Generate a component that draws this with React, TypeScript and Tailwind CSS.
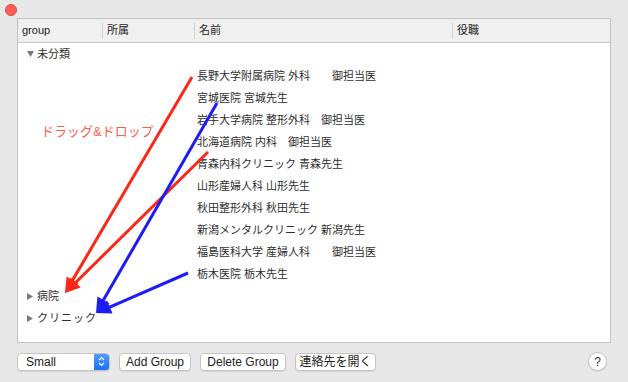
import React from 'react';

const font = { fontFamily: '"Liberation Sans", "Noto Sans CJK JP", sans-serif' };

const items = [
    '長野大学附属病院 外科　　御担当医',
    '宮城医院 宮城先生',
    '岩手大学病院 整形外科　御担当医',
    '北海道病院 内科　御担当医',
    '青森内科クリニック 青森先生',
    '山形産婦人科 山形先生',
    '秋田整形外科 秋田先生',
    '新潟メンタルクリニック 新潟先生',
    '福島医科大学 産婦人科　　御担当医',
    '栃木医院 栃木先生',
];

// arrowhead polygon for a line ending at (tx, ty)
function head(fx: number, fy: number, tx: number, ty: number, len = 15, half = 7) {
    const dx = tx - fx;
    const dy = ty - fy;
    const d = Math.hypot(dx, dy);
    const ux = dx / d;
    const uy = dy / d;
    const bx = tx - ux * len;
    const by = ty - uy * len;
    return `${tx},${ty} ${bx - uy * half},${by + ux * half} ${bx + uy * half},${by - ux * half}`;
}

const Arrows: React.FC = () => {
    const red = '#fb2717';
    const blue = '#1c1cf5';
    const lines = [
        { f: [192, 77], t: [65, 293], c: red },
        { f: [208, 152], t: [65, 293], c: red },
        { f: [217, 103], t: [96, 313], c: blue },
        { f: [188, 273], t: [96, 313], c: blue },
    ];
    return (
        <svg className="absolute inset-0 pointer-events-none" width="628" height="382">
            {lines.map((l, i) => {
                const [fx, fy] = l.f;
                const [tx, ty] = l.t;
                const d = Math.hypot(tx - fx, ty - fy);
                const ex = tx - ((tx - fx) / d) * 10;
                const ey = ty - ((ty - fy) / d) * 10;
                return (
                    <g key={i}>
                        <line x1={fx} y1={fy} x2={ex} y2={ey} stroke={l.c} strokeWidth="3" />
                        <polygon points={head(fx, fy, tx, ty)} fill={l.c} />
                    </g>
                );
            })}
        </svg>
    );
};

const Down = () => (
    <svg width="7" height="6" viewBox="0 0 7 6" className="mr-[3px]">
        <polygon points="0,0 7,0 3.5,6" fill="#7a7a7a" />
    </svg>
);

const Right = () => (
    <svg width="6" height="7" viewBox="0 0 6 7" className="mr-[4px]">
        <polygon points="0,0 6,3.5 0,7" fill="#7a7a7a" />
    </svg>
);

const Button: React.FC<{ label: string; w: string }> = ({ label, w }) => (
    <div className={`${w} h-[18px] flex items-center justify-center bg-white border border-[#c4c4c4] rounded-[4px] shadow-[0_1px_1px_rgba(0,0,0,0.08)] text-[12px] text-[#222222]`}>
        {label}
    </div>
);

const App: React.FC = () => {
    return (
        <div className="w-[628px] h-[382px] bg-[#e8e8e8] relative overflow-hidden" style={font}>
            <div className="h-[18px] pl-[5px] pt-[4px]">
                <div className="w-[12px] h-[12px] rounded-full bg-[#fc5f57] border border-[#e2463f]"></div>
            </div>

            <div className="ml-[17px] w-[594px] h-[325px] bg-white border border-[#c2c2c2] flex flex-col">
                <div className="h-[24px] bg-[#f0f0f0] border-b border-[#c8c8c8] flex items-center text-[11px] text-[#222222]">
                    <div className="w-[85px] pl-[4px] h-[16px] flex items-center border-r border-[#d3d3d3]">group</div>
                    <div className="w-[92px] pl-[4px] h-[16px] flex items-center border-r border-[#d3d3d3]">所属</div>
                    <div className="w-[258px] pl-[4px] h-[16px] flex items-center border-r border-[#d3d3d3]">名前</div>
                    <div className="pl-[4px]">役職</div>
                </div>

                <div className="flex flex-col text-[11px] text-[#2e2e2e]">
                    <div className="h-[22px] flex items-center pl-[9px]">
                        <Down />
                        <span>未分類</span>
                    </div>
                    {items.map((t) => (
                        <div key={t} className="h-[22px] flex items-center pl-[179px] whitespace-pre">
                            {t}
                        </div>
                    ))}
                    <div className="h-[22px] flex items-center pl-[9px]">
                        <Right />
                        <span>病院</span>
                    </div>
                    <div className="h-[22px] flex items-center pl-[9px]">
                        <Right />
                        <span className="tracking-[1px]">クリニック</span>
                    </div>
                </div>
            </div>

            <div className="flex items-center mt-[9px] ml-[17px] gap-[9px]">
                <div className="w-[93px] h-[18px] flex bg-white border border-[#c4c4c4] rounded-[4px] shadow-[0_1px_1px_rgba(0,0,0,0.08)] overflow-hidden">
                    <div className="flex-1 pl-[8px] text-[12px] text-[#222222] flex items-center">Small</div>
                    <div className="w-[15px] bg-gradient-to-b from-[#4f9bff] to-[#1a6ff0] flex items-center justify-center">
                        <svg width="7" height="11" viewBox="0 0 7 11">
                            <path d="M1 4 L3.5 1.5 L6 4 M1 7 L3.5 9.5 L6 7" stroke="white" strokeWidth="1.2" fill="none" />
                        </svg>
                    </div>
                </div>
                <Button label="Add Group" w="w-[72px]" />
                <Button label="Delete Group" w="w-[86px]" />
                <Button label="連絡先を開く" w="w-[81px]" />
                <div className="flex-1"></div>
                <div className="w-[19px] h-[19px] mr-[21px] rounded-full bg-white border border-[#c4c4c4] shadow-[0_1px_1px_rgba(0,0,0,0.1)] flex items-center justify-center text-[12px] text-[#333333]">
                    ?
                </div>
            </div>

            <div className="absolute left-[41px] top-[122px] text-[13px] text-[#fb5d4f]">ドラッグ&amp;ドロップ</div>
            <Arrows />
        </div>
    );
};

export default App;
